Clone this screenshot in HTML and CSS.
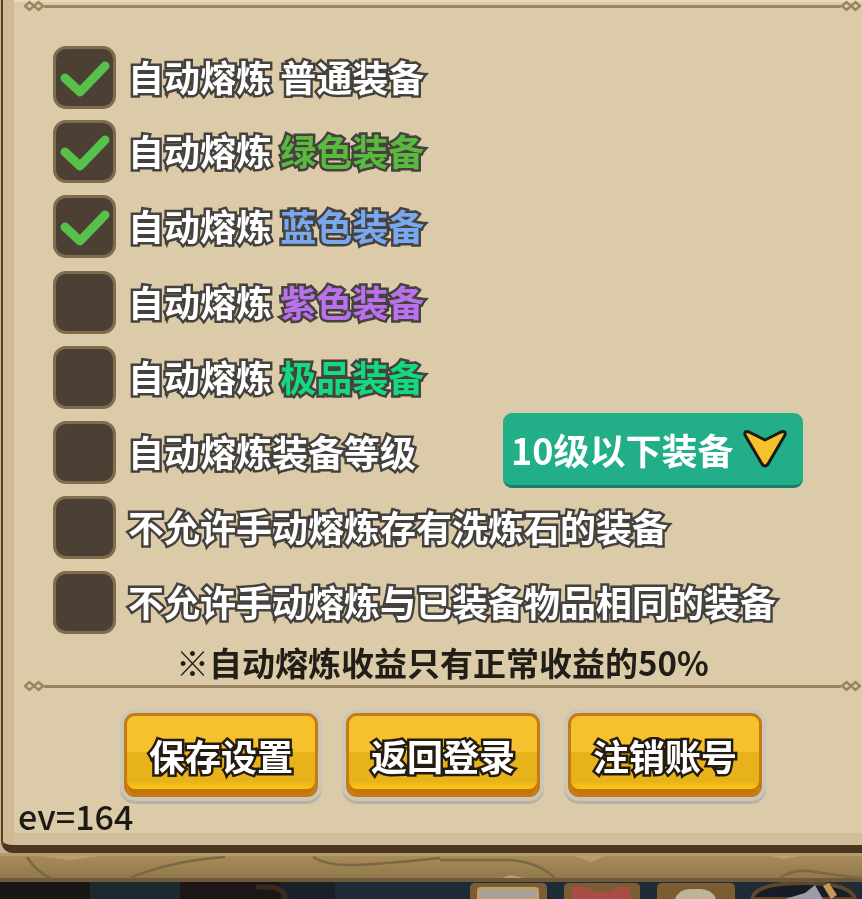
FILE: index.html
```html
<!DOCTYPE html>
<html>

<head>
  <meta charset="UTF-8">
  <title>设置</title>
  <link rel="stylesheet" href="styles.css">
</head>

<body>
  <div class="panel">
    <div class="divider">
      <svg class="knot" viewBox="0 0 20 12"><path d="M1 6l4.5-4L10 6l-4.5 4zM10 6l4.5-4L19 6l-4.5 4z" /></svg>
      <span class="line"></span>
      <svg class="knot" viewBox="0 0 20 12"><path d="M1 6l4.5-4L10 6l-4.5 4zM10 6l4.5-4L19 6l-4.5 4z" /></svg>
    </div>

    <div class="options">
      <div class="option">
        <span class="check"><svg viewBox="0 0 52 40"><path d="M6 20l15 14L46 8" /></svg></span>
        <span class="label">自动熔炼 普通装备</span>
      </div>
      <div class="option">
        <span class="check"><svg viewBox="0 0 52 40"><path d="M6 20l15 14L46 8" /></svg></span>
        <span class="label">自动熔炼 <em class="green">绿色装备</em></span>
      </div>
      <div class="option">
        <span class="check"><svg viewBox="0 0 52 40"><path d="M6 20l15 14L46 8" /></svg></span>
        <span class="label">自动熔炼 <em class="blue">蓝色装备</em></span>
      </div>
      <div class="option">
        <span class="check"></span>
        <span class="label">自动熔炼 <em class="purple">紫色装备</em></span>
      </div>
      <div class="option">
        <span class="check"></span>
        <span class="label">自动熔炼 <em class="jade">极品装备</em></span>
      </div>
      <div class="option">
        <span class="check"></span>
        <span class="label">自动熔炼装备等级</span>
        <div class="select">
          <span>10级以下装备</span>
          <svg viewBox="0 0 46 40"><path d="M3 6Q2 1 7 3L23 11 39 3Q44 1 43 6L26 35Q23 39 20 35z" /></svg>
        </div>
      </div>
      <div class="option">
        <span class="check"></span>
        <span class="label">不允许手动熔炼存有洗炼石的装备</span>
      </div>
      <div class="option">
        <span class="check"></span>
        <span class="label">不允许手动熔炼与已装备物品相同的装备</span>
      </div>
    </div>

    <p class="note">※自动熔炼收益只有正常收益的50%</p>

    <div class="divider">
      <svg class="knot" viewBox="0 0 20 12"><path d="M1 6l4.5-4L10 6l-4.5 4zM10 6l4.5-4L19 6l-4.5 4z" /></svg>
      <span class="line"></span>
      <svg class="knot" viewBox="0 0 20 12"><path d="M1 6l4.5-4L10 6l-4.5 4zM10 6l4.5-4L19 6l-4.5 4z" /></svg>
    </div>

    <div class="buttons">
      <button class="gold-btn">保存设置</button>
      <button class="gold-btn">返回登录</button>
      <button class="gold-btn">注销账号</button>
    </div>

    <div class="ev">ev=164</div>
  </div>

  <!-- 底部木条 -->
  <svg class="wood" viewBox="0 0 862 29">
    <defs>
      <linearGradient id="wood-fill" x1="0" y1="0" x2="0" y2="1">
        <stop offset="0" stop-color="#aa8f5c" />
        <stop offset="1" stop-color="#8d7549" />
      </linearGradient>
    </defs>
    <rect width="862" height="29" fill="url(#wood-fill)" />
    <rect width="862" height="3" fill="#b39a70" />
    <rect y="25" width="862" height="4" fill="#6b5a3c" />
    <path d="M27 4q10 16 24 21M130 25Q170 8 225 4M313 4q14 9 42 8t85-7M440 7h70q28 2 45 18M780 25q14-10 36-6t46 6" fill="none" stroke="#7e6640" stroke-width="2.5" />
    <path d="M40 3h60l-30 4zM575 3h30l-14 6zM770 3h30l-16 3zM510 22l14 3h-22z" fill="#b89e68" />
  </svg>

  <!-- 面板后面的场景 -->
  <svg class="scene" viewBox="0 0 862 17">
    <rect width="862" height="17" fill="#1f2b36" />
    <rect width="90" height="17" fill="#191615" />
    <rect x="90" width="90" height="17" fill="#1b2a2c" />
    <rect x="180" width="100" height="17" fill="#1c1716" />
    <rect x="280" width="55" height="17" fill="#1a2025" />
    <path d="M256 5h12q16 0 18 12" fill="none" stroke="#3a2a1e" stroke-width="5" />
    <path d="M470 17V6q0-5 5-5h67q5 0 5 5v11z" fill="#7c5c32" />
    <path d="M478 17V9q0-3 3-3h54q3 0 3 3v8z" fill="#a7a19a" stroke="#caa35a" stroke-width="2" />
    <path d="M564 17V6q0-5 5-5h66q5 0 5 5v11z" fill="#7c5c32" />
    <path d="M572 17V7q0-2 2-2h12l8 5h15l8-5h11q2 0 2 2v10z" fill="#a84c44" />
    <path d="M657 17V6q0-5 5-5h68q5 0 5 5v11z" fill="#7c5c32" />
    <path d="M675 17q4-10 15-10h10q12 0 16 10z" fill="#bfb39a" />
    <path d="M752 17C754 6 772 1 803 1S852 6 855 17z" fill="#161d26" stroke="#5f4628" stroke-width="4" />
    <path d="M785 17l20-6 10-8 8 14z" fill="#9b9ca4" />
    <path d="M823 4l6-3 8 12-6 4z" fill="#c79a58" />
  </svg>
</body>

</html>
```

FILE: styles.css
```css
* {
  margin: 0;
  padding: 0;
  box-sizing: border-box;
}

body {
  width: 862px;
  height: 899px;
  overflow: hidden;
  background: #c9b48e;
  font-family: "Noto Sans CJK SC", "Noto Sans", sans-serif;
  filter: blur(0.6px);
}

/* 主面板 */
.panel {
  height: 853px;
  margin-left: 1px;
  background: #dccba9;
  border-left: 2px solid #5a4128;
  border-bottom: 8px solid #4c351f;
  border-bottom-left-radius: 12px;
  box-shadow: inset 11px 0 0 #cfba94, inset 0 -12px 0 #d1be9a, inset 0 2px 0 #e8d9bc;
}

/* 分隔线 */
.divider {
  display: flex;
  align-items: center;
  height: 12px;
  padding: 0 1px 0 21px;
}

.line {
  flex: 1;
  height: 3px;
  background: #9b8560;
}

.knot {
  width: 20px;
  height: 12px;
  flex: none;
}

.knot path {
  fill: none;
  stroke: #9b8560;
  stroke-width: 2.4;
}

/* 选项列表 */
.options {
  display: flex;
  flex-direction: column;
  gap: 12px;
  padding: 34px 59px 0 50px;
}

.option {
  display: flex;
  align-items: center;
  height: 63px;
}

.option:nth-child(2) {
  margin-top: -1px;
}

.option:nth-child(4) {
  margin-top: 1px;
}

.check {
  width: 63px;
  height: 63px;
  flex: none;
  display: flex;
  align-items: center;
  justify-content: center;
  background: #4b4033;
  border: 3px solid #7f6c4e;
  border-radius: 13px;
  margin-right: 12px;
}

.check svg {
  width: 52px;
  height: 40px;
}

.check path {
  fill: none;
  stroke: #57c14b;
  stroke-width: 9;
  stroke-linecap: round;
  stroke-linejoin: round;
}

.label {
  font-size: 36px;
  font-weight: 700;
  line-height: 46px;
  padding-bottom: 3px;
  color: #fff;
  white-space: nowrap;
  -webkit-text-stroke: 5px #45423e;
  paint-order: stroke fill;
}

.label em {
  font-style: normal;
}

.green {
  color: #5bb93f;
}

.blue {
  color: #79a8ee;
}

.purple {
  color: #bb71ee;
}

.jade {
  color: #15d97f;
}

/* 下拉框 */
.select {
  display: flex;
  align-items: center;
  gap: 9px;
  width: 300px;
  height: 75px;
  flex: none;
  margin-left: auto;
  margin-bottom: 4px;
  padding-left: 8px;
  background: #22ae88;
  border-bottom: 3px solid #178066;
  border-radius: 9px;
  color: #fff;
  font-size: 36px;
  font-weight: 700;
  white-space: nowrap;
}

.select svg {
  width: 46px;
  height: 40px;
  flex: none;
}

.select path {
  fill: #f5c22c;
  stroke: #1d1a12;
  stroke-width: 3;
  stroke-linejoin: round;
}

/* 提示文字 */
.note {
  margin-top: 10px;
  padding-left: 173px;
  font-size: 33px;
  font-weight: 700;
  line-height: 36px;
  color: #211d17;
}

/* 按钮 */
.buttons {
  display: flex;
  gap: 28px;
  padding: 21px 0 0 121px;
}

.gold-btn {
  width: 194px;
  height: 84px;
  border: 3px solid #c47c12;
  border-radius: 11px;
  background: linear-gradient(#f5c22e 0 46%, #e8b31a 46% 84%, #f9c415 92%);
  box-shadow: inset 0 -5px 0 #c4740a, 0 0 0 4px #cdc6b6, 0 3px 0 4px #b8b2a4;
  font-family: inherit;
  font-size: 36px;
  font-weight: 700;
  color: #fff;
  -webkit-text-stroke: 5px #241c10;
  paint-order: stroke fill;
}

.ev {
  margin-top: -1px;
  padding-left: 15px;
  font-size: 34px;
  font-weight: 500;
  line-height: 40px;
  color: #1c1a16;
}

/* 底部 */
.wood,
.scene {
  display: block;
  width: 862px;
}

.wood {
  height: 29px;
}

.scene {
  height: 17px;
}
```
